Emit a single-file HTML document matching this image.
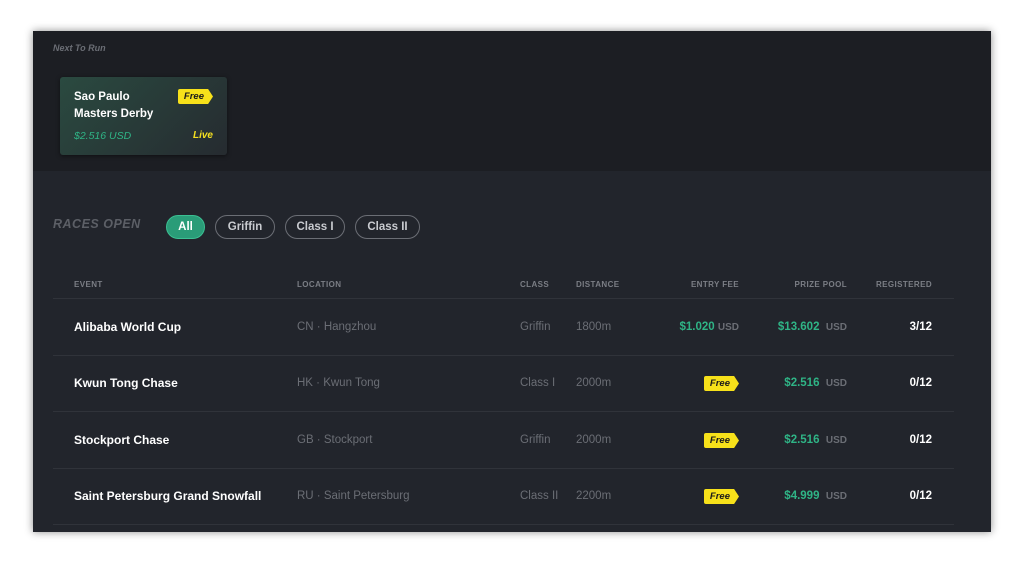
<!DOCTYPE html><html><head><style>
body{margin:0;width:1024px;height:564px;background:#fff;font-family:"Liberation Sans",sans-serif;position:relative;overflow:hidden}
.panel{position:absolute;left:33px;top:31px;width:958px;height:501px;background:#22252c;box-shadow:0 0 8px rgba(0,0,0,.45);overflow:hidden}
.top{position:absolute;left:0;top:0;width:958px;height:140px;background:#1c1e23}
.ntr{position:absolute;left:20px;top:12px;font-size:9px;font-style:italic;font-weight:bold;color:#6b6e75}
.card{position:absolute;left:27px;top:46px;width:167px;height:78px;border-radius:3px;background:linear-gradient(135deg,#2a4a40,#262b30);box-shadow:0 1px 4px rgba(0,0,0,.5)}
.card .t{position:absolute;left:14px;top:12px;color:#fff;font-weight:bold;font-size:11.5px;line-height:17px}
.card .p{position:absolute;left:14px;top:53px;color:#2fb486;font-style:italic;font-size:10.5px}
.card .l{position:absolute;right:14px;top:53px;color:#f5e020;font-style:italic;font-weight:bold;font-size:10px}
.free{display:inline-block;background:#f7e11a;color:#1a1a1a;font-style:italic;font-weight:bold;font-size:9.5px;height:15px;line-height:15px;padding:0 9px 0 6px;clip-path:polygon(0 0,86% 0,100% 50%,86% 100%,0 100%);border-radius:2px}
.card .free{position:absolute;right:14px;top:12px}
.ro{position:absolute;left:20px;top:186px;color:#5c5f66;font-style:italic;font-weight:bold;font-size:12.5px;letter-spacing:.5px}
.pill{position:absolute;top:184px;height:21px;line-height:21px;padding-top:1px;border:1px solid #6b6e75;border-radius:12px;color:#c9cbd0;font-size:11.5px;font-weight:bold;text-align:center}
.hdr{position:absolute;top:249px;font-size:8px;color:#7b7e85;font-weight:bold;letter-spacing:.4px}
.line{position:absolute;left:20px;width:901px;height:1px;background:#30333a}
.c{position:absolute;font-size:11.5px;color:#6b6e75;white-space:nowrap}
.ev{color:#fff;font-weight:bold;font-size:12px}
.g{color:#2fb486;font-weight:bold}
.u{color:#6b6e75;font-weight:bold;font-size:10px}
.r{color:#fff;font-weight:bold;text-align:right}
</style></head><body>
<div class="panel">
<div class="top"><div class="ntr">Next To Run</div>
<div class="card"><div class="t">Sao Paulo<br>Masters Derby</div><span class="free">Free</span><div class="p">$2.516 USD</div><div class="l">Live</div></div></div>
<div class="ro">RACES OPEN</div>
<div class="pill" style="left:133px;width:37px;background:#2a9c78;border-color:#3bbf92;color:#fff">All</div>
<div class="pill" style="left:182px;width:58px">Griffin</div>
<div class="pill" style="left:252px;width:58px">Class I</div>
<div class="pill" style="left:322px;width:63px">Class II</div>
<div class="hdr" style="left:41px">EVENT</div><div class="hdr" style="left:264px">LOCATION</div><div class="hdr" style="left:487px">CLASS</div><div class="hdr" style="left:543px">DISTANCE</div>
<div class="hdr" style="right:252px">ENTRY FEE</div><div class="hdr" style="right:144px">PRIZE POOL</div><div class="hdr" style="right:59px">REGISTERED</div>
<div class="line" style="top:267px"></div>
<div class="c ev" style="left:41px;top:289px">Alibaba World Cup</div><div class="c" style="left:264px;top:290px">CN · Hangzhou</div><div class="c" style="left:487px;top:290px">Griffin</div><div class="c" style="left:543px;top:290px">1800m</div>
<div class="c" style="right:252px;top:290px"><span class="g">$1.020</span> <span class="u">USD</span></div><div class="c" style="right:144px;top:290px"><span class="g">$13.602</span> &nbsp;<span class="u">USD</span></div><div class="c r" style="right:59px;top:290px">3/12</div>
<div class="line" style="top:324px"></div>
<div class="c ev" style="left:41px;top:345px">Kwun Tong Chase</div><div class="c" style="left:264px;top:346px">HK · Kwun Tong</div><div class="c" style="left:487px;top:346px">Class I</div><div class="c" style="left:543px;top:346px">2000m</div>
<div class="c" style="right:252px;top:345px"><span class="free">Free</span></div><div class="c" style="right:144px;top:346px"><span class="g">$2.516</span> &nbsp;<span class="u">USD</span></div><div class="c r" style="right:59px;top:346px">0/12</div>
<div class="line" style="top:380px"></div>
<div class="c ev" style="left:41px;top:402px">Stockport Chase</div><div class="c" style="left:264px;top:403px">GB · Stockport</div><div class="c" style="left:487px;top:403px">Griffin</div><div class="c" style="left:543px;top:403px">2000m</div>
<div class="c" style="right:252px;top:402px"><span class="free">Free</span></div><div class="c" style="right:144px;top:403px"><span class="g">$2.516</span> &nbsp;<span class="u">USD</span></div><div class="c r" style="right:59px;top:403px">0/12</div>
<div class="line" style="top:437px"></div>
<div class="c ev" style="left:41px;top:458px">Saint Petersburg Grand Snowfall</div><div class="c" style="left:264px;top:459px">RU · Saint Petersburg</div><div class="c" style="left:487px;top:459px">Class II</div><div class="c" style="left:543px;top:459px">2200m</div>
<div class="c" style="right:252px;top:458px"><span class="free">Free</span></div><div class="c" style="right:144px;top:459px"><span class="g">$4.999</span> &nbsp;<span class="u">USD</span></div><div class="c r" style="right:59px;top:459px">0/12</div>
<div class="line" style="top:493px"></div>
</div>
</body></html>
